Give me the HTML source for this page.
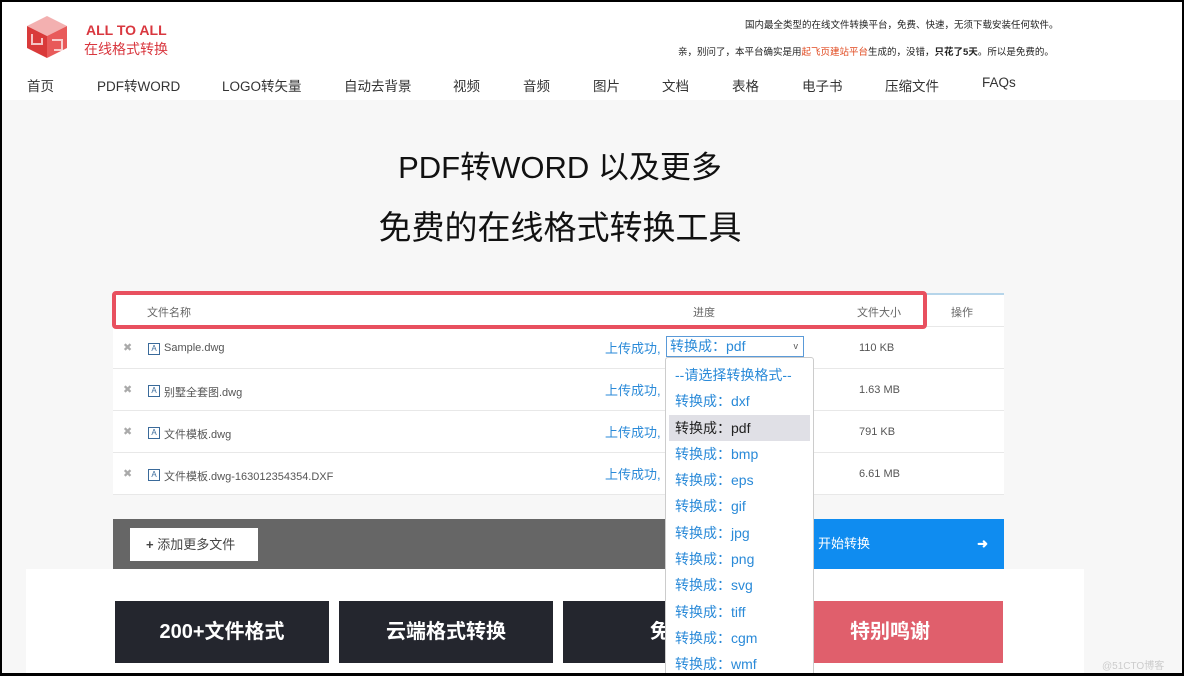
<!DOCTYPE html>
<html><head><meta charset="utf-8"><style>
*{margin:0;padding:0;box-sizing:border-box}
html,body{width:1184px;height:676px;overflow:hidden}
body{font-family:"Liberation Sans","Noto Sans CJK SC",sans-serif;background:#000;position:relative}
.frame{position:absolute;left:2px;top:2px;width:1180px;height:671px;background:#f7f7f7;overflow:hidden}
.abs{position:absolute}
.hdr{left:0;top:0;width:1180px;height:98px;background:#fff}
.nav span{position:absolute;top:73px;font-size:13.5px;color:#333}
.t1{left:0;width:1116px;text-align:center;color:#111}
.table{left:111px;top:291px;width:891px;height:202px;background:#fff}
.row{position:absolute;left:0;width:891px;height:42px;border-bottom:1px solid #e8e8e8;font-size:11px;color:#555}
.row .x{position:absolute;left:10px;top:14px;color:#aaa;font-size:11px}
.row .ic{position:absolute;left:35px;top:16px;width:12px;height:12px;border:1px solid #3a6a9a;font-size:8px;line-height:10px;text-align:center;color:#3a6a9a}
.row .nm{position:absolute;left:51px;top:15px}
.row .up{position:absolute;left:492px;top:11px;font-size:13px;color:#2a8ad8}
.row .sz{position:absolute;left:746px;top:15px}
.dd{left:663px;top:355px;width:149px;height:330px;background:#fff;border:1px solid #ccc;border-radius:3px;padding-top:4px}
.dd div{height:26.3px;line-height:26px;padding-left:6px;font-size:14px;color:#2a8ad8;margin:0 3px}
.card{top:599px;width:214px;height:62px;background:#24262e;color:#fff;font-size:20px;font-weight:bold;text-align:center;line-height:62px}
</style></head><body><div class="frame">
<div class="abs hdr"></div>
<svg class="abs" style="left:23px;top:12px" width="44" height="46" viewBox="0 0 44 46">
<polygon points="22,2 42,12 22,22 2,12" fill="#f3b0b0"/>
<polygon points="2,12 22,22 22,44 2,34" fill="#d93a3a"/>
<polygon points="22,22 42,12 42,34 22,44" fill="#e85a5a"/>
<path d="M7,20 v10 h10 v-6 M27,26 h10 v10 h-8" stroke="#fff" stroke-width="2" fill="none" opacity=".7"/>
</svg>
<div class="abs" style="left:84px;top:20px;color:#d9373f;font-weight:bold;font-size:14px">ALL TO ALL</div>
<div class="abs" style="left:82px;top:37px;color:#d9373f;font-size:14px">在线格式转换</div>
<div class="abs" style="left:743px;top:15px;font-size:9.5px;color:#222">国内最全类型的在线文件转换平台，免费、快速，无须下载安装任何软件。</div>
<div class="abs" style="left:676px;top:42px;font-size:9.5px;color:#222">亲，别问了，本平台确实是用<span style="color:#e0481e">起飞页建站平台</span>生成的，没错，<b>只花了5天</b>。所以是免费的。</div>
<div class="nav"><span style="left:25px">首页</span><span style="left:95px">PDF转WORD</span><span style="left:220px">LOGO转矢量</span><span style="left:342px">自动去背景</span><span style="left:451px">视频</span><span style="left:521px">音频</span><span style="left:591px">图片</span><span style="left:660px">文档</span><span style="left:730px">表格</span><span style="left:800px">电子书</span><span style="left:883px">压缩文件</span><span style="left:980px">FAQs</span></div>
<div class="abs t1" style="top:140px;font-size:31px">PDF转WORD 以及更多</div>
<div class="abs t1" style="top:199px;font-size:33px">免费的在线格式转换工具</div>
<div class="abs table">
<div style="position:absolute;left:812px;top:0;width:79px;height:2px;background:#b6d5ea"></div>
<div class="row" style="top:0;height:34px;color:#666"><span style="position:absolute;left:34px;top:11px">文件名称</span><span style="position:absolute;left:580px;top:11px">进度</span><span style="position:absolute;left:744px;top:11px">文件大小</span><span style="position:absolute;left:838px;top:11px">操作</span></div>
<div class="row" style="top:34px"><span class="x">✖</span><span class="ic">A</span><span class="nm">Sample.dwg</span><span class="up">上传成功,</span><span style="position:absolute;left:553px;top:9px;width:138px;height:21px;border:1px solid #5a9ad8;font-size:14px;color:#2a8ad8;padding-left:3px;line-height:19px">转换成：pdf<span style="position:absolute;right:5px;font-size:9px;color:#555">v</span></span><span class="sz">110 KB</span></div>
<div class="row" style="top:76px"><span class="x">✖</span><span class="ic">A</span><span class="nm">别墅全套图.dwg</span><span class="up">上传成功,</span><span class="sz">1.63 MB</span></div>
<div class="row" style="top:118px"><span class="x">✖</span><span class="ic">A</span><span class="nm">文件模板.dwg</span><span class="up">上传成功,</span><span class="sz">791 KB</span></div>
<div class="row" style="top:160px"><span class="x">✖</span><span class="ic">A</span><span class="nm">文件模板.dwg-163012354354.DXF</span><span class="up">上传成功,</span><span class="sz">6.61 MB</span></div>
</div>
<div class="abs" style="left:110px;top:289px;width:815px;height:38px;border:4px solid #e8505f;border-radius:4px"></div>
<div class="abs" style="left:111px;top:517px;width:694px;height:50px;background:#666"></div>
<div class="abs" style="left:128px;top:526px;width:128px;height:33px;background:#fff;font-size:13px;color:#444;line-height:33px;padding-left:16px"><b>+</b> 添加更多文件</div>
<div class="abs" style="left:805px;top:517px;width:197px;height:50px;background:#0f8cf0;color:#fff;font-size:13px;line-height:50px;padding-left:11px">开始转换<span style="position:absolute;right:16px;font-weight:bold">➜</span></div>
<div class="abs" style="left:24px;top:567px;width:1058px;height:110px;background:#fff"></div>
<div class="abs card" style="left:113px">200+文件格式</div>
<div class="abs card" style="left:337px">云端格式转换</div>
<div class="abs card" style="left:561px">免费</div>
<div class="abs card" style="left:775px;width:226px;background:#e05f6c">特别鸣谢</div>
<div class="abs dd">
<div>--请选择转换格式--</div><div>转换成：dxf</div><div style="background:#e0e0e6;color:#222">转换成：pdf</div><div>转换成：bmp</div><div>转换成：eps</div><div>转换成：gif</div><div>转换成：jpg</div><div>转换成：png</div><div>转换成：svg</div><div>转换成：tiff</div><div>转换成：cgm</div><div>转换成：wmf</div>
</div>
<div class="abs" style="left:1100px;top:655px;font-size:10px;color:#ccc">@51CTO博客</div>
</div></body></html>
